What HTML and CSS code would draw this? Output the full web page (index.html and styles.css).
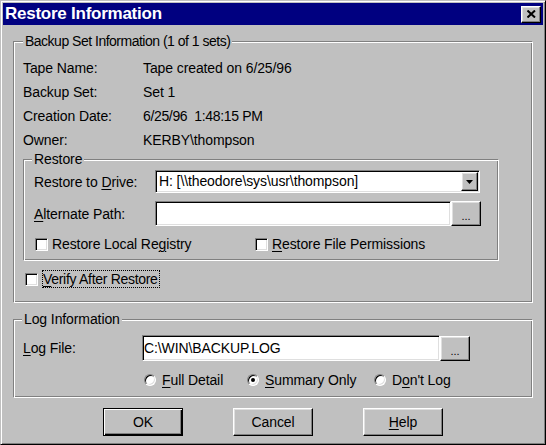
FILE: index.html
```html
<!DOCTYPE html>
<html>
<head>
<meta charset="utf-8">
<title>Restore Information</title>
<link rel="stylesheet" href="styles.css">
</head>
<body>
<div class="window">
  <div class="titlebar">
    <span class="title">Restore Information</span>
    <span class="close"><svg width="9" height="8" viewBox="0 0 9 8"><path d="M0.5 0.5 L8 7.5 M8 0.5 L0.5 7.5" stroke="#000" stroke-width="2" fill="none"/></svg></span>
  </div>

  <div class="group group-backup">
    <div class="legend legend-backup">Backup Set Information (1 of 1 sets)</div>
    <div class="info">
      <div class="info-row"><span class="info-label">Tape Name:</span><span>Tape created on 6/25/96</span></div>
      <div class="info-row"><span class="info-label">Backup Set:</span><span>Set 1</span></div>
      <div class="info-row"><span class="info-label">Creation Date:</span><span class="date">6/25/96&nbsp; 1:48:15 PM</span></div>
      <div class="info-row"><span class="info-label">Owner:</span><span>KERBY\thompson</span></div>
    </div>

    <div class="group group-restore">
      <div class="legend legend-restore">Restore</div>
      <div class="field-row row-drive">
        <span class="field-label label-restore">Restore to <u>D</u>rive:</span>
        <div class="combo sunken">
          <span class="combo-text">H: [\\theodore\sys\usr\thompson]</span>
          <span class="combo-btn raised"><svg width="7" height="4" viewBox="0 0 7 4"><path d="M0 0H7L3.5 4Z" fill="#000"/></svg></span>
        </div>
      </div>
      <div class="field-row row-alt">
        <span class="field-label label-restore"><u>A</u>lternate Path:</span>
        <div class="textbox sunken alt-box"></div>
        <span class="browse raised">...</span>
      </div>
      <div class="check-row">
        <span class="check-item check-registry"><span class="checkbox sunken"></span><span>Restore Local Re<u>g</u>istry</span></span>
        <span class="check-item"><span class="checkbox sunken"></span><span><u>R</u>estore File Permissions</span></span>
      </div>
    </div>

    <div class="verify-row">
      <span class="checkbox sunken"></span><span class="focus"><u>V</u>erify After Restore</span>
    </div>
  </div>

  <div class="group group-log">
    <div class="legend legend-log">Log Information</div>
    <div class="field-row row-log">
      <span class="field-label label-log"><u>L</u>og File:</span>
      <div class="textbox sunken log-box">C:\WIN\BACKUP.LOG</div>
      <span class="browse browse-log raised">...</span>
    </div>
    <div class="radio-row">
      <span class="radio-item radio-full"><span class="radio"></span><span><u>F</u>ull Detail</span></span>
      <span class="radio-item radio-summary"><span class="radio on"></span><span><u>S</u>ummary Only</span></span>
      <span class="radio-item"><span class="radio"></span><span>D<u>o</u>n't Log</span></span>
    </div>
  </div>

  <div class="buttons">
    <span class="btn btn-default">OK</span>
    <span class="btn">Cancel</span>
    <span class="btn"><u>H</u>elp</span>
  </div>
</div>
</body>
</html>
```

FILE: styles.css
```css
* { box-sizing: border-box; }

body {
  margin: 0;
  font-family: "Liberation Sans", Arial, sans-serif;
  font-size: 14px;
  letter-spacing: -0.1px;
  color: #000;
  background: #c0c0c0;
}

u {
  text-decoration-thickness: 1px;
  text-underline-offset: 2px;
}

.window {
  width: 546px;
  height: 445px;
  background: #c0c0c0;
  border: 1px solid;
  border-color: #c0c0c0 #000 #000 #c0c0c0;
  box-shadow: inset 1px 1px #fff, inset -1px -1px #808080;
  padding: 2px;
}

.titlebar {
  height: 22px;
  background: #000080;
  color: #fff;
  display: flex;
  align-items: center;
  justify-content: space-between;
  padding: 0 2px 0 2px;
}

.title {
  font-weight: bold;
  font-size: 17px;
  line-height: 22px;
  letter-spacing: -0.25px;
}

.close {
  width: 20px;
  height: 17px;
  background: #c0c0c0;
  border: 1px solid;
  border-color: #fff #000 #000 #fff;
  box-shadow: inset -1px -1px #808080, inset 1px 1px #dfdfdf;
  display: flex;
  align-items: center;
  justify-content: center;
}

.sunken {
  background: #fff;
  border: 1px solid;
  border-color: #808080 #fff #fff #808080;
  box-shadow: inset 1px 1px #000, inset -1px -1px #dfdfdf;
}

.raised {
  background: #c0c0c0;
  border: 1px solid;
  border-color: #fff #000 #000 #fff;
  box-shadow: inset -1px -1px #808080, inset 1px 1px #dfdfdf;
}

.group {
  border: 1px solid;
  border-color: #808080 #fff #fff #808080;
  box-shadow: inset 1px 1px #fff, inset -1px -1px #808080;
}

.legend {
  display: table;
  height: 16px;
  line-height: 16px;
  margin-top: -9px;
  padding: 0 2px;
  background: #c0c0c0;
}

.legend-backup { letter-spacing: -0.5px; }

.group-backup {
  margin: 16px 10px 0;
  padding: 0 9px 14px;
}

.info { margin-top: 7px; }

.info-row {
  display: flex;
  line-height: 24px;
}

.info-label { width: 120px; }

.date { letter-spacing: -0.35px; }

.group-restore {
  width: 476px;
  margin-top: 7px;
  padding: 0 0 8px 10px;
}

.legend-restore { margin-left: -2px; }
.legend-log { margin-left: -1px; }

.field-row {
  display: flex;
  align-items: center;
}

.field-label { flex: none; }
.label-restore { width: 121px; }
.label-log { width: 119px; }

.row-drive {
  margin-top: 3px;
  height: 23px;
}

.combo {
  width: 325px;
  height: 23px;
  padding: 1px;
  display: flex;
  align-items: stretch;
}

.combo-text {
  flex: 1;
  padding-left: 2px;
  line-height: 19px;
  white-space: nowrap;
}

.combo-btn {
  width: 17px;
  display: flex;
  align-items: center;
  justify-content: center;
  padding-top: 1px;
}

.row-alt {
  margin-top: 8px;
  height: 25px;
}

.alt-box {
  width: 296px;
  height: 25px;
}

.browse {
  width: 30px;
  height: 25px;
  display: flex;
  align-items: center;
  justify-content: center;
  font-size: 11px;
  padding-top: 4px;
  letter-spacing: 0;
}

.check-row {
  display: flex;
  align-items: center;
  margin-top: 10px;
  line-height: 16px;
}

.check-item {
  display: flex;
  align-items: center;
}

.check-registry {
  width: 220px;
  margin-left: 1px;
}

.checkbox {
  width: 13px;
  height: 13px;
  flex: none;
  margin-right: 4px;
}

.verify-row {
  display: flex;
  align-items: center;
  margin-top: 9px;
  padding-left: 2px;
}

.focus {
  border: 1px dotted #000;
  line-height: 16px;
  padding: 0 1px 0 0;
  letter-spacing: -0.3px;
}

.group-log {
  margin: 16px 10px 0;
  padding: 0 9px 9px;
}

.row-log {
  margin-top: 8px;
  height: 26px;
}

.log-box {
  width: 298px;
  height: 26px;
  padding-left: 1px;
  line-height: 24px;
  white-space: nowrap;
}

.browse-log {
  height: 25px;
  align-self: flex-end;
}

.radio-row {
  display: flex;
  align-items: center;
  margin-top: 11px;
  line-height: 16px;
  padding-left: 121px;
}

.radio-item {
  display: flex;
  align-items: center;
}

.radio-full { width: 103px; }
.radio-summary { width: 127px; }

.radio {
  width: 12px;
  height: 12px;
  flex: none;
  border-radius: 50%;
  background: #fff;
  border: 1px solid;
  border-color: #808080 #fff #fff #808080;
  box-shadow: inset 1px 1px #000, inset -1px -1px #dfdfdf;
  margin-right: 6px;
  display: flex;
  align-items: center;
  justify-content: center;
}

.radio.on::after {
  content: "";
  width: 4px;
  height: 4px;
  border-radius: 50%;
  background: #000;
}

.buttons {
  display: flex;
  gap: 50px;
  margin-top: 10px;
  padding-left: 100px;
}

.btn {
  width: 80px;
  height: 28px;
  display: flex;
  align-items: center;
  justify-content: center;
  background: #c0c0c0;
  border: 1px solid;
  border-color: #fff #000 #000 #fff;
  box-shadow: inset -1px -1px #808080, inset 1px 1px #dfdfdf;
}

.btn-default {
  border-color: #000;
  box-shadow: inset 1px 1px #fff, inset -1px -1px #000, inset -2px -2px #808080;
}
```
